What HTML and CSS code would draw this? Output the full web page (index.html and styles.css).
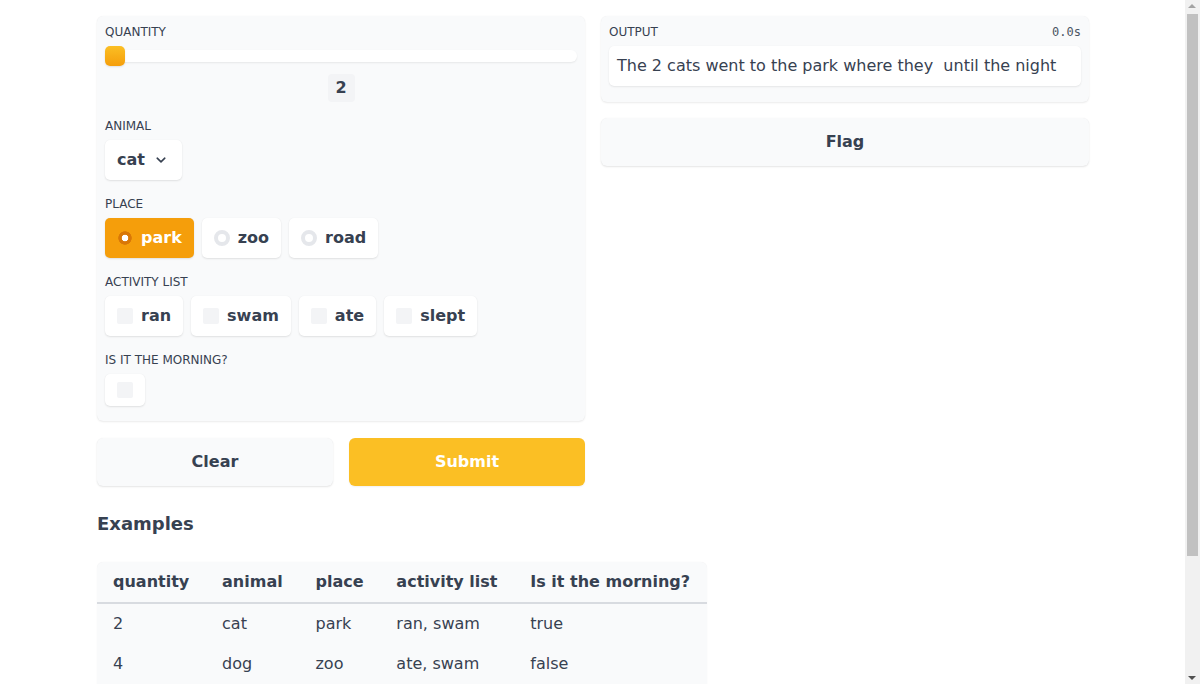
FILE: index.html
```html
<!DOCTYPE html>
<html lang="en">
<head>
<meta charset="utf-8">
<title>Sentence Builder</title>
<link rel="stylesheet" href="styles.css">
</head>
<body>
<div class="app">
  <div class="row">
    <div class="col">
      <div class="panel form">
        <div class="block">
          <div class="lbl">Quantity</div>
          <div class="slider"><div class="track"></div><div class="thumb"></div></div>
          <div class="num-wrap"><span class="num">2</span></div>
        </div>
        <div class="block">
          <div class="lbl">Animal</div>
          <div class="opts">
            <div class="select"><span class="t">cat</span><svg width="10" height="6" viewBox="0 0 10 6"><path d="M1.2 1.2L5 4.8L8.8 1.2" fill="none" stroke="#374151" stroke-width="1.6" stroke-linecap="round" stroke-linejoin="round"/></svg></div>
          </div>
        </div>
        <div class="block">
          <div class="lbl">Place</div>
          <div class="opts">
            <div class="opt selected"><span class="radio on"></span><span class="t">park</span></div>
            <div class="opt"><span class="radio"></span><span class="t">zoo</span></div>
            <div class="opt"><span class="radio"></span><span class="t">road</span></div>
          </div>
        </div>
        <div class="block">
          <div class="lbl">Activity list</div>
          <div class="opts">
            <div class="opt"><span class="check"></span><span class="t">ran</span></div>
            <div class="opt"><span class="check"></span><span class="t">swam</span></div>
            <div class="opt"><span class="check"></span><span class="t">ate</span></div>
            <div class="opt"><span class="check"></span><span class="t">slept</span></div>
          </div>
        </div>
        <div class="block">
          <div class="lbl">Is it the morning?</div>
          <div class="opts">
            <div class="opt single"><span class="check"></span></div>
          </div>
        </div>
      </div>
      <div class="btn-row">
        <button class="btn secondary">Clear</button>
        <button class="btn primary">Submit</button>
      </div>
    </div>
    <div class="col">
      <div class="panel output">
        <div class="out-head"><span class="lbl">Output</span><span class="time">0.0s</span></div>
        <div class="textbox">The 2 cats went to the park where they  until the night</div>
      </div>
      <button class="btn secondary flag">Flag</button>
    </div>
  </div>
  <h2 class="ex-title">Examples</h2>
  <div class="table-wrap">
    <table>
      <thead>
        <tr><th>quantity</th><th>animal</th><th>place</th><th>activity list</th><th>Is it the morning?</th></tr>
      </thead>
      <tbody>
        <tr><td>2</td><td>cat</td><td>park</td><td>ran, swam</td><td>true</td></tr>
        <tr><td>4</td><td>dog</td><td>zoo</td><td>ate, swam</td><td>false</td></tr>
      </tbody>
    </table>
    <div class="table-more"></div>
  </div>
</div>
<div class="scrollbar" aria-hidden="true">
  <span class="sb-arrow up"></span>
  <span class="sb-thumb"></span>
  <span class="sb-arrow down"></span>
</div>
</body>
</html>
```
FILE: styles.css
```css
* { box-sizing: border-box; }
html, body { margin: 0; padding: 0; background: #ffffff; }
body {
  font-family: "DejaVu Sans", "Noto Sans", sans-serif;
  color: #374151;
  font-size: 16px;
  padding-right: 15px;
}
.app {
  width: 992px;
  margin: 0 96px 0 97px;
  padding: 16px 0 0;
}
.row {
  display: flex;
  gap: 16px;
  align-items: flex-start;
}
.col {
  flex: 1 1 0;
  min-width: 0;
  display: flex;
  flex-direction: column;
  gap: 16px;
}
.panel {
  background: #f9fafb;
  border-radius: 6px;
  box-shadow: 0 1px 2px rgba(0,0,0,0.08), 0 0 1px rgba(0,0,0,0.06);
  padding: 8px 8px 16px;
}
.form {
  display: flex;
  flex-direction: column;
  gap: 16px;
  padding-bottom: 15px;
}
.lbl {
  display: block;
  font-size: 12px;
  line-height: 16px;
  height: 16px;
  text-transform: uppercase;
  color: #374151;
}
.block .lbl { margin-bottom: 6px; }
.slider {
  position: relative;
  height: 20px;
  margin-top: 1px;
}
.track {
  position: relative;
  top: 4px;
  height: 12px;
  background: #ffffff;
  border-radius: 6px;
  box-shadow: 0 1px 2px rgba(0,0,0,0.08);
}
.thumb {
  position: absolute;
  left: 0;
  top: 0;
  width: 20px;
  height: 20px;
  border-radius: 5px;
  background: linear-gradient(to bottom, #fbbf24, #f59e0b);
  box-shadow: 0 1px 2px rgba(0,0,0,0.1);
}
.num-wrap {
  display: flex;
  justify-content: center;
  margin-top: 8px;
}
.num {
  display: block;
  width: 27px;
  height: 28px;
  line-height: 28px;
  text-align: center;
  background: #f3f4f6;
  border-radius: 4px;
  font-weight: bold;
  font-size: 16px;
  color: #374151;
}
.opts {
  display: flex;
  gap: 8px;
}
.select, .opt {
  display: flex;
  align-items: center;
  height: 40px;
  background: #ffffff;
  border-radius: 5px;
  box-shadow: 0 1px 2px rgba(0,0,0,0.1), 0 0 1px rgba(0,0,0,0.05);
  font-weight: bold;
  font-size: 16px;
  color: #374151;
}
.t {
  line-height: 18px;
}
.select {
  padding: 0 16px 0 12px;
  gap: 11px;
}
.select svg { display: block; }
.opt {
  padding: 0 12px;
  gap: 8px;
}
.opt.selected {
  background: #f59e0b;
  color: #ffffff;
}
.opt.single {
  height: 32px;
}
.radio {
  display: block;
  width: 16px;
  height: 16px;
  border-radius: 50%;
  border: 4px solid #e5e7eb;
  background: #ffffff;
}
.radio.on {
  border: none;
  background: radial-gradient(circle, #ffffff 0 3px, #d97706 3.6px 6.4px, transparent 7px);
}
.check {
  display: block;
  width: 16px;
  height: 16px;
  border-radius: 2px;
  background: #f3f4f6;
}
.btn-row {
  display: flex;
  gap: 16px;
  margin-top: 1px;
}
.btn {
  flex: 1 1 0;
  height: 48px;
  padding: 0 0 2px;
  border: none;
  border-radius: 6px;
  font-family: "DejaVu Sans", "Noto Sans", sans-serif;
  font-weight: bold;
  font-size: 16px;
  cursor: pointer;
}
.btn.secondary {
  background: #f9fafb;
  color: #374151;
  box-shadow: 0 1px 2px rgba(0,0,0,0.1), 0 0 1px rgba(0,0,0,0.06);
}
.btn.primary {
  background: #fbbf24;
  color: #ffffff;
  box-shadow: 0 1px 2px rgba(0,0,0,0.06);
}
.flag { flex: none; width: 100%; }
.out-head {
  display: flex;
  justify-content: space-between;
  align-items: center;
  height: 16px;
  margin-bottom: 6px;
}
.time {
  font-family: "DejaVu Sans Mono", "Liberation Mono", monospace;
  font-size: 12px;
  color: #4b5563;
}
.textbox {
  height: 40px;
  line-height: 40px;
  padding: 0 8px;
  background: #ffffff;
  border-radius: 5px;
  box-shadow: 0 1px 2px rgba(0,0,0,0.08), 0 0 1px rgba(0,0,0,0.05);
  white-space: pre;
  font-size: 16px;
  color: #374151;
}
.ex-title {
  margin: 24px 0 24px;
  font-size: 18px;
  line-height: 28px;
  font-weight: bold;
  color: #374151;
}
.table-wrap {
  display: inline-block;
  background: #f9fafb;
  border-radius: 6px 6px 0 0;
  box-shadow: 0 0 1px rgba(0,0,0,0.08);
  overflow: hidden;
  margin-bottom: 40px;
}
table {
  border-collapse: collapse;
  font-size: 16px;
  color: #374151;
}
th {
  text-align: left;
  font-weight: bold;
  padding: 8px 16.8px 8px 16px;
  line-height: 24px;
  border-bottom: 2px solid #d8dbe0;
  white-space: nowrap;
}
td {
  padding: 8px 16.8px 8px 16px;
  line-height: 24px;
  white-space: nowrap;
}
.table-more {
  height: 80px;
}
.scrollbar {
  position: fixed;
  top: 0;
  right: 0;
  width: 15px;
  height: 100vh;
  background: #f1f1f1;
}
.sb-thumb {
  position: absolute;
  left: 2px;
  right: 2px;
  top: 14px;
  height: 542px;
  background: #c1c1c1;
}
.sb-arrow {
  position: absolute;
  left: 3px;
  width: 0;
  height: 0;
  border-left: 4.5px solid transparent;
  border-right: 4.5px solid transparent;
}
.sb-arrow.up {
  top: 4px;
  border-bottom: 4px solid #a3a3a3;
}
.sb-arrow.down {
  bottom: 4px;
  border-top: 4px solid #505050;
}
```
